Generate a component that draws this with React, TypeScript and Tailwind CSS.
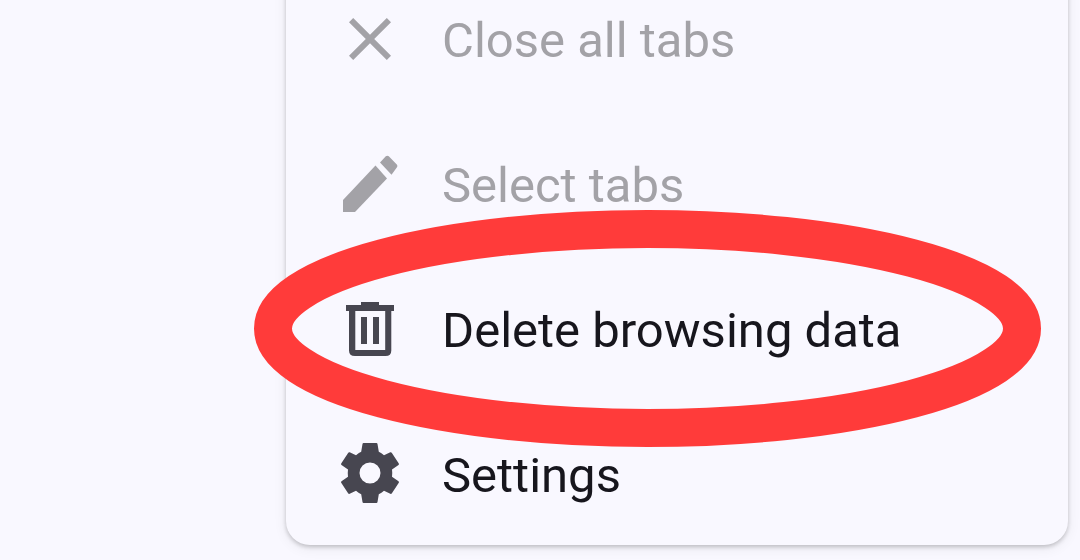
import React from 'react';
import { clsx } from 'clsx';

interface MenuItem {
  label: string;
  icon: React.ReactNode;
  disabled?: boolean;
  circled?: boolean;
}

const CloseIcon = () => (
  <path d="M57 19.2L52.8 15 36 31.8 19.2 15 15 19.2 31.8 36 15 52.8 19.2 57 36 40.2 52.8 57 57 52.8 40.2 36z" />
);

const PencilIcon = () => (
  <>
    <path d="M9 52L41.5 17.5 53 30.5 21 64H9z" />
    <path d="M46 14.5L51.8 8.3Q53.3 7 54.8 8.3L62.8 16.5Q64.2 18 62.8 19.5L57.5 26.8z" />
  </>
);

const TrashIcon = () => (
  <>
    <path d="M12 12H27V9H45V12H60V18H12z" />
    <path
      fillRule="evenodd"
      d="M15 18H57.3V57.5Q57.3 63 51.5 63H21Q15 63 15 57.5zM21.3 18V57H51.2V18z"
    />
    <path d="M27 24H33V51H27zM39 24H45V51H39z" />
  </>
);

const GearIcon = () => (
  <path
    fillRule="evenodd"
    d="M29.5 5H42.5Q43.3 5 43.5 6L44.8 13.7Q47.5 15 50 17.2L56.3 14.3Q57.3 14 57.9 15L64.8 25.6Q65.3 26.5 64.5 27L58 31.5Q58.5 35 58 38.7L64.5 43.2Q65.3 43.8 64.8 44.7L57.9 55.3Q57.3 56.2 56.3 55.8L50 52.8Q47.5 55 44.8 56.3L43.5 64Q43.3 65 42.5 65H29.5Q28.7 65 28.5 64L27.2 56.3Q24.5 55 22 52.8L15.7 55.8Q14.7 56.2 14.1 55.3L7.2 44.7Q6.7 43.8 7.5 43.2L14 38.7Q13.5 35 14 31.5L7.5 27Q6.7 26.5 7.2 25.6L14.1 15Q14.7 14 15.7 14.3L22 17.2Q24.5 15 27.2 13.7L28.5 6Q28.7 5 29.5 5zM36 24.5A10.5 10.5 0 1 0 36 45.5 10.5 10.5 0 1 0 36 24.5z"
  />
);

const items: MenuItem[] = [
  { label: 'Close all tabs', icon: <CloseIcon />, disabled: true },
  { label: 'Select tabs', icon: <PencilIcon />, disabled: true },
  { label: 'Delete browsing data', icon: <TrashIcon />, circled: true },
  { label: 'Settings', icon: <GearIcon /> },
];

// Hand-drawn marker around the highlighted row
const MarkerCircle = () => (
  <svg
    className="pointer-events-none absolute -top-[46px] -left-[33px] z-10 h-[238px] w-[788px] max-w-none"
    viewBox="0 0 788 238"
    fill="none"
    aria-hidden="true"
  >
    <ellipse cx="394.5" cy="119.5" rx="374.5" ry="99.5" stroke="#ff3b3a" strokeWidth="38" />
  </svg>
);

const MenuRow: React.FC<{ item: MenuItem }> = ({ item }) => (
  <li className="relative">
    <button
      type="button"
      disabled={item.disabled}
      className={clsx(
        'flex h-[145px] w-full items-center gap-9 pt-[3px] pl-12 text-left text-[49px] leading-[56px] whitespace-nowrap',
        item.disabled ? 'text-[#a3a2a7]' : 'text-[#17161d]'
      )}
    >
      <svg
        className={clsx('size-[72px] shrink-0', item.disabled ? 'fill-[#a3a2a7]' : 'fill-[#474650]')}
        viewBox="0 0 72 72"
        aria-hidden="true"
      >
        {item.icon}
      </svg>
      <span className="pt-1">{item.label}</span>
    </button>
    {item.circled && <MarkerCircle />}
  </li>
);

export default function App() {
  return (
    <main className="flex h-screen flex-col justify-end overflow-hidden bg-[#f9f8ff] pr-3 pb-[15px] pl-[286px] font-[Roboto,sans-serif]">
      <ul className="rounded-b-3xl bg-[#f9f8ff] shadow-[0_2px_4px_rgba(0,0,0,0.2),0_3px_14px_rgba(0,0,0,0.07)]">
        {items.map((item) => (
          <MenuRow key={item.label} item={item} />
        ))}
      </ul>
    </main>
  );
}
